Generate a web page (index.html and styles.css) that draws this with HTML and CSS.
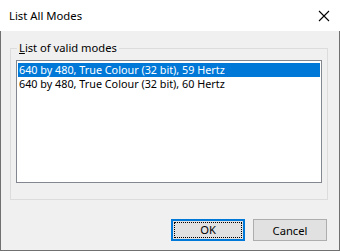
FILE: index.html
```html
<!DOCTYPE html>
<html lang="en">
<head>
	<title>List All Modes</title>
	<link rel="stylesheet" href="styles.css">
</head>
<body>
	<div class="window">
		<div class="titlebar">
			<span class="title">List All Modes</span>
			<svg class="close" width="12" height="12" viewBox="0 0 12 12">
				<path d="M1 1 L11 11 M11 1 L1 11" stroke="#000" stroke-width="1.1" fill="none"/>
			</svg>
		</div>
		<div class="client">
			<fieldset class="group">
				<legend><u>L</u>ist of valid modes</legend>
				<div class="listbox">
					<div class="item selected">640 by 480, True Colour (32 bit), 59 Hertz</div>
					<div class="item">640 by 480, True Colour (32 bit), 60 Hertz</div>
				</div>
			</fieldset>
			<div class="buttons">
				<button class="btn default"><span class="focus">OK</span></button>
				<button class="btn">Cancel</button>
			</div>
		</div>
	</div>
</body>
</html>
```

FILE: styles.css
```css
body{
	margin: 0;
	font-family: "Noto Sans", "Open Sans", sans-serif;
	font-size: 11.2px;
	color: #000;
}
.window{
	width: 340px;
	height: 251px;
	display: flex;
	flex-direction: column;
}
.titlebar{
	height: 31px;
	background: #fff;
	display: flex;
	align-items: center;
	justify-content: space-between;
	padding: 0 9px;
}
.title{
	font-size: 11.3px;
	margin-top: -1px;
}
.close{
	margin-right: 1px;
}
.client{
	flex: 1;
	background: #f0f0f0;
	border: 1px solid #707070;
	border-top: none;
	display: flex;
	flex-direction: column;
}
.group{
	width: 318px;
	box-sizing: border-box;
	height: 160px;
	margin: 9px 0 0 9px;
	padding: 0 5px;
	border: 1px solid #dcdcdc;
	min-width: 0;
}
.group legend{
	margin-left: 1px;
	padding: 0 2px;
	line-height: 16px;
}
.listbox{
	margin-top: 4px;
	width: 306px;
	height: 123px;
	box-sizing: border-box;
	background: #fff;
	border: 1px solid #828790;
	padding: 2px 1px;
}
.item{
	height: 14px;
	line-height: 14px;
	padding-left: 1px;
	font-size: 10.8px;
	white-space: nowrap;
}
.item.selected{
	background: #0078d7;
	color: #fff;
}
.buttons{
	display: flex;
	justify-content: flex-end;
	gap: 8px;
	padding: 19px 12px 0 0;
}
.btn{
	width: 74px;
	height: 22px;
	box-sizing: border-box;
	font: inherit;
	background: #e1e1e1;
	border: 1px solid #adadad;
	padding: 0;
	color: #000;
}
.btn.default{
	border: 2px solid #0078d7;
	padding: 1px;
}
.focus{
	display: block;
	height: 100%;
	box-sizing: border-box;
	border: 1px dotted #000;
	line-height: 14px;
}
```
